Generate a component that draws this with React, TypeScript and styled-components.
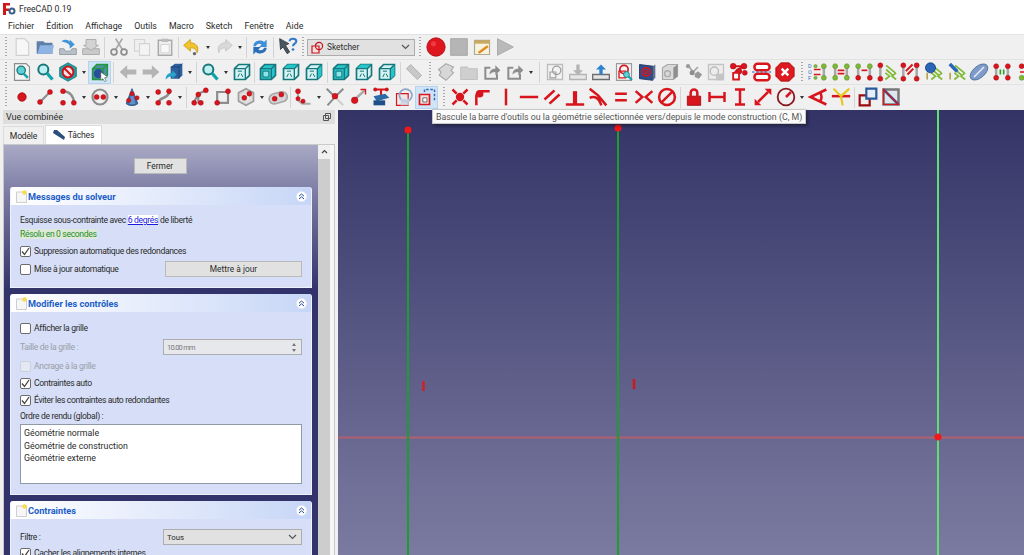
import React from 'react'
import styled, { createGlobalStyle } from 'styled-components'

const GlobalStyle = createGlobalStyle`
  html, body { margin: 0; padding: 0; background: #f0f0f0; }
  body { font-family: Roboto, "Noto Sans", sans-serif; font-size: 8.8px; color: #2b2b2b; }
`

const Page = styled.div`
  position: relative;
  width: 1024px;
  height: 555px;
  overflow: hidden;
  display: flex;
  flex-direction: column;
  background: #f0f0f0;
`

const TitleBar = styled.div`
  height: 17px;
  background: #fff;
  display: flex;
  align-items: center;
  gap: 3px;
  padding-left: 3px;
  font-size: 8.6px;
`

const MenuBar = styled.div`
  height: 17px;
  background: #fff;
  display: flex;
  align-items: center;
  padding-left: 8px;
  gap: 12px;
  font-size: 8.8px;
`

const ToolRow = styled.div`
  height: 25px;
  display: flex;
  align-items: center;
  border-top: 1px solid #e2e2e2;
  box-sizing: border-box;
  background: #f0f0f0;
`

const Grip = styled.div<{ $w: number }>`
  width: ${({ $w }) => $w}px;
  height: 20px;
  flex: none;
  position: relative;
  &::after {
    content: '';
    position: absolute;
    right: 3px;
    top: 0;
    bottom: 0;
    width: 2px;
    background: repeating-linear-gradient(to bottom, #a9a9a9 0 1px, transparent 1px 3px);
  }
`

const ToolBtn = styled.div<{ $active?: boolean }>`
  width: 23px;
  height: 23px;
  flex: none;
  display: flex;
  align-items: center;
  justify-content: center;
  box-sizing: border-box;
  background: ${({ $active }) => ($active ? '#cfe4f7' : 'transparent')};
  border: 1px solid ${({ $active }) => ($active ? '#b5d3ee' : 'transparent')};
  svg { width: 20px; height: 20px; display: block; }
`

const Drop = styled.div`
  width: 9px;
  flex: none;
  display: flex;
  justify-content: center;
  &::before {
    content: '';
    border-left: 2.5px solid transparent;
    border-right: 2.5px solid transparent;
    border-top: 3px solid #333;
  }
`

const Sep = styled.div<{ $w: number }>`
  width: ${({ $w }) => $w}px;
  height: 21px;
  flex: none;
  display: flex;
  justify-content: center;
  &::before {
    content: '';
    width: 1px;
    background: #d4d4d4;
  }
`

const Combo = styled.div<{ $disabled?: boolean }>`
  box-sizing: border-box;
  display: flex;
  align-items: center;
  border: 1px solid #adadad;
  background: ${({ $disabled }) => ($disabled ? '#e6e8ec' : '#e1e1e1')};
  color: ${({ $disabled }) => ($disabled ? '#777' : '#2b2b2b')};
  height: 16px;
  padding: 0 3px;
  gap: 3px;
  font-size: 8.3px;
`

const SketcherCombo = styled(Combo)`
  width: 108px;
  height: 17px;
  flex: none;
  svg.logo { width: 13px; height: 13px; }
`

const Chevron = styled.svg`
  width: 9px;
  height: 6px;
  margin-left: auto;
  margin-right: 1px;
  flex: none;
`

const Main = styled.div`
  flex: 1;
  display: flex;
  min-height: 0;
  margin-top: 1px;
`

const Dock = styled.div`
  width: 338px;
  flex: none;
  display: flex;
  flex-direction: column;
  padding: 0 3px;
  box-sizing: border-box;
`

const DockTitle = styled.div`
  height: 14px;
  flex: none;
  background: #dedede;
  display: flex;
  align-items: center;
  justify-content: space-between;
  padding: 0 4px 0 3px;
  font-size: 9px;
`

const TabStrip = styled.div`
  height: 20px;
  flex: none;
  display: flex;
  align-items: flex-end;
`

const Tab = styled.div<{ $active?: boolean }>`
  height: ${({ $active }) => ($active ? 19 : 18)}px;
  width: ${({ $active }) => ($active ? 57 : 41)}px;
  box-sizing: border-box;
  background: ${({ $active }) => ($active ? '#fff' : '#f0f0f0')};
  border: 1px solid #dcdcdc;
  border-bottom: none;
  display: flex;
  align-items: center;
  justify-content: center;
  gap: 3px;
  font-size: 8.6px;
  letter-spacing: -0.2px;
  margin-left: ${({ $active }) => ($active ? 1 : 0)}px;
`

const TabPane = styled.div`
  flex: 1;
  min-height: 0;
  display: flex;
  border: 1px solid #c9c9c9;
  border-bottom: none;
  background: #f6f6f6;
  padding-right: 4px;
`

const TaskArea = styled.div`
  flex: 1;
  min-width: 0;
  background: linear-gradient(to bottom, #a9a9c5 0, #7a7aa3 50px, #33336b 145px);
  padding: 13px 6px 0 6px;
  display: flex;
  flex-direction: column;
  align-items: stretch;
  font-size: 8.6px;
  letter-spacing: -0.35px;
`

const CloseButton = styled.div`
  align-self: center;
  flex: none;
  width: 53px;
  height: 16px;
  box-sizing: border-box;
  background: #e1e1e1;
  border: 1px solid #b9b9b9;
  display: flex;
  align-items: center;
  justify-content: center;
  margin-bottom: 13px;
  margin-left: -2px;
  font-size: 8.4px;
  letter-spacing: 0;
`

const Card = styled.section`
  flex: none;
  margin-bottom: 6px;
  border-radius: 3px 3px 0 0;
  overflow: hidden;
  background: #d6dff7;
  border: 1px solid #eef2fd;
  border-top: none;
`

const CardHead = styled.header`
  height: 18px;
  background: linear-gradient(to right, #fff, #c7d6f7);
  display: flex;
  align-items: center;
  padding: 0 3px 0 5px;
  gap: 1px;
  color: #215dc6;
  font-weight: 700;
  font-size: 9.2px;
  letter-spacing: 0;
  svg.page { width: 11px; height: 13px; flex: none; }
`

const Collapse = styled.svg`
  width: 11px;
  height: 11px;
  margin-left: auto;
  margin-right: 1px;
`

const CardBody = styled.div<{ $top: number }>`
  padding: ${({ $top }) => $top}px 9px 10px 9px;
  display: flex;
  flex-direction: column;
`

const Row = styled.div<{ $mt?: number; $muted?: boolean }>`
  display: flex;
  align-items: center;
  justify-content: space-between;
  min-height: 14px;
  margin-top: ${({ $mt }) => $mt ?? 0}px;
  color: ${({ $muted }) => ($muted ? '#9a9ea8' : 'inherit')};
`

const CheckLine = styled.label`
  display: flex;
  align-items: center;
  gap: 3px;
`

const Box = styled.span<{ $disabled?: boolean }>`
  width: 11px;
  height: 11px;
  flex: none;
  box-sizing: border-box;
  border: 1px solid ${({ $disabled }) => ($disabled ? '#ccd0da' : '#6c6c6c')};
  border-radius: 2px;
  background: ${({ $disabled }) => ($disabled ? '#e4e8f3' : '#fff')};
  display: flex;
  align-items: center;
  justify-content: center;
  svg { width: 9px; height: 9px; }
`

const LinkText = styled.a`
  color: #1a1ae0;
  text-decoration: underline;
  background: #fff;
  margin: 0 2px;
`

const Solved = styled.span`
  color: #1f8f2f;
  background: #dfe9d8;
`

const UpdateButton = styled.div`
  width: 137px;
  height: 16px;
  box-sizing: border-box;
  background: #e1e1e1;
  border: 1px solid #b9b9b9;
  display: flex;
  align-items: center;
  justify-content: center;
  font-size: 8.4px;
  letter-spacing: 0;
`

const FieldBox = styled(Combo)`
  width: 139px;
  position: relative;
  font-size: ${({ $disabled }) => ($disabled ? 7.4 : 7.8)}px;
  letter-spacing: ${({ $disabled }) => ($disabled ? -0.7 : 0)}px;
`

const Spinner = styled.span`
  margin-left: auto;
  display: flex;
  flex-direction: column;
  gap: 3px;
  margin-right: 2px;
  &::before, &::after {
    content: '';
    border-left: 2px solid transparent;
    border-right: 2px solid transparent;
  }
  &::before { border-bottom: 3px solid #777; }
  &::after { border-top: 3px solid #777; }
`

const ListBox = styled.div`
  height: 60px;
  box-sizing: border-box;
  background: #fff;
  border: 1px solid #8f9aa6;
  margin-top: 1px;
  padding: 2px 3px;
  line-height: 12.5px;
  font-size: 8.8px;
  letter-spacing: 0;
`

const Scrollbar = styled.div`
  width: 12px;
  flex: none;
  background: #f0f0f0;
  display: flex;
  flex-direction: column;
  align-items: center;
  padding-top: 4px;
  svg { width: 7px; height: 5px; flex: none; }
  &::after {
    content: '';
    margin-top: 5px;
    width: 100%;
    flex: 1;
    background: #cdcdcd;
  }
`

const Viewport = styled.div`
  flex: 1;
  position: relative;
  background: linear-gradient(to bottom, #333366 0%, #7b7ba1 100%);
  svg { position: absolute; left: 0; top: 0; display: block; }
`

const Tooltip = styled.div`
  position: absolute;
  left: 432px;
  top: 109px;
  width: 374px;
  height: 15px;
  box-sizing: border-box;
  background: #fbfbfb;
  border: 1px solid #c8c8c8;
  box-shadow: 2px 2px 3px rgba(0, 0, 0, 0.35);
  display: flex;
  align-items: center;
  padding-left: 3px;
  white-space: nowrap;
  color: #555;
`

const RED = '#d8141c'
const DKRED = '#9c0a10'
const TEAL = '#17777c'
const CY = '#27c4ca'
const GREY = '#b4b4b4'
const GREEN = '#7fb935'

const Dot = ({ x, y, r = 3, c = RED }: { x: number; y: number; r?: number; c?: string }) => (
  <circle cx={x} cy={y} r={r} fill={c} stroke={c === RED ? DKRED : '#4d7a1c'} strokeWidth="0.5" />
)
const L = ({ d, c = RED, w = 2.5 }: { d: string; c?: string; w?: number }) => (
  <path d={d} stroke={c} strokeWidth={w} fill="none" />
)
const Glass = ({ fill = '#bff0f0' }: { fill?: string }) => (
  <>
    <circle cx="10" cy="9" r="6" fill={fill} stroke={TEAL} strokeWidth="2.4" />
    <path d="M14.5 13.5 21 21" stroke="#12a3a8" strokeWidth="4" />
  </>
)
const Cube = ({ face }: { face?: 'front' | 'top' | 'right' | 'all' }) => (
  <>
    <path d="M3 8 8 3h13v13l-5 5H3z" fill={face === 'all' ? CY : '#d5f3f3'} stroke={TEAL} strokeWidth="2" />
    {face === 'top' && <path d="M3 8 8 3h13l-5 5z" fill={CY} />}
    {face === 'right' && <path d="M16 8l5-5v13l-5 5z" fill={CY} />}
    <path d="M3 8h13v13M16 8l5-5" fill="none" stroke={TEAL} strokeWidth="1.6" />
    <path d={face === 'all' ? 'M6 11h7v7H6z' : 'M7 18l2-4M13 18l-2-4M7 11h5'} fill={face === 'all' ? '#8ce4e6' : 'none'} stroke={TEAL} strokeWidth="1.2" />
  </>
)
const Arrow = ({ flip, c = GREY }: { flip?: boolean; c?: string }) => (
  <path d="M2 12 11 4v5h11v6H11v5z" fill={c} transform={flip ? 'matrix(-1 0 0 1 24 0)' : undefined} />
)
const Tray = ({ up, c = GREY, a = GREY }: { up?: boolean; c?: string; a?: string }) => (
  <>
    <path d="M2 15h20v6H2z" fill="#e6e6e6" stroke={c} strokeWidth="1.6" />
    <path d={up ? 'M12 3l6 6h-4v6h-4V9H6z' : 'M12 16l6-6h-4V3h-4v7H6z'} fill={a} />
  </>
)
const Share = () => (
  <>
    <path d="M18 14v6H4V7h6" fill="none" stroke="#8d8d8d" strokeWidth="2.4" />
    <path d="M9 15c0-5 3-7 7-7V4l6 6-6 6v-4c-3 0-5 1-7 3z" fill="#8d8d8d" />
  </>
)
const Bars = ({ a }: { a: string }) => <path d={a} stroke={RED} strokeWidth="3" fill="none" />
const Sel = ({ c1, c2, mid }: { c1: string; c2: string; mid: string }) => (
  <>
    <L d="M5 5v14M19 5v14" c="#a8a8a8" w={3} />
    <L d={mid} w={2} />
    <Dot x={5} y={5} c={c1} />
    <Dot x={19} y={5} c={c1} />
    <Dot x={5} y={19} c={c2} />
    <Dot x={19} y={19} c={c2} />
  </>
)
const Chevrons = () => (
  <>
    <L d="M11 4 22 13M11 9 19 16" c={GREEN} w={2} />
    <L d="M10 21l5-4-5-4M23 21l-5-4 5-4" c={GREEN} w={2} />
  </>
)

const icons: Record<string, React.ReactNode> = {
  new: <path d="M5 2h10l5 5v15H5z" fill="#f7f7f7" stroke="#d0d0d0" strokeWidth="1.4" />,
  open: (
    <>
      <path d="M2 5h8l2 2h9v13H2z" fill="#5f7fa8" />
      <path d="M3 20 6 10h17l-3 10z" fill="#8fb4e4" />
    </>
  ),
  save: <><path d="M2 14h5l2 3h6l2-3h5v7H2z" fill="#b8bfc6" stroke="#8d949b" /><path d="M4 5c5-3 9-2 10 1V3l6 6-6 5v-4c-2-3-6-4-10-5z" fill="#3f93d8" /></>,
  saveas: <><path d="M2 14h20v7H2z" fill="#c9c9c9" stroke="#a5a5a5" /><path d="M6 3h12v7h3l-9 6-9-6h3z" fill="#d3d3d3" stroke="#a5a5a5" /></>,
  cut: <><path d="M8 2l8 13M16 2 8 15" stroke="#a8a8a8" strokeWidth="2" /><circle cx="6" cy="18" r="3.5" fill="none" stroke="#8d8d8d" strokeWidth="2" /><circle cx="18" cy="18" r="3.5" fill="none" stroke="#8d8d8d" strokeWidth="2" /></>,
  copy: <><path d="M3 3h12v14H3z" fill="#efefef" stroke="#d4d4d4" strokeWidth="1.4" /><path d="M9 8h12v14H9z" fill="#f3f3f3" stroke="#d4d4d4" strokeWidth="1.4" /></>,
  paste: <><path d="M4 4h16v18H4z" fill="#eee" stroke="#a9a9a9" strokeWidth="1.8" /><path d="M8 2h8v4H8z" fill="#bdbdbd" /><path d="M7 9h10v10H7z" fill="#f8f8f8" stroke="#ccc" /></>,
  undo: <><path d="M10 3 2 10l8 7v-4c4 0 7 1 8 6 3-7-1-12-8-12z" fill="#f2c230" stroke="#c89a10" /><circle cx="15" cy="20" r="2" fill="#666" /></>,
  redo: <path d="M14 3l8 7-8 7v-4c-4 0-7 1-8 6-3-7 1-12 8-12z" fill="#d9d9d9" stroke="#c4c4c4" />,
  refresh: <><path d="M4 11c0-6 8-9 13-5l3-3v9h-9l3-3c-3-2-6-1-7 2z" fill="#3f8fd8" /><path d="M20 13c0 6-8 9-13 5l-3 3v-9h9l-3 3c3 2 6 1 7-2z" fill="#2a6fb8" /></>,
  whats: <><path d="M2 2l11 6-4 2 5 8-3 2-5-8-3 3z" fill="#4a5560" stroke="#2f3840" /><path d="M14 5c0-4 8-4 8 0 0 3-4 3-4 6" fill="none" stroke="#3278c8" strokeWidth="2.4" /><circle cx="18" cy="15" r="1.6" fill="#3278c8" /></>,
  record: <><circle cx="12" cy="12" r="11" fill="#e0161e" stroke="#a50f14" /><circle cx="9" cy="8" r="3" fill="#ee3c42" /></>,
  stop: <path d="M2 2h20v20H2z" fill="#b5b5b5" stroke="#a0a0a0" />,
  macro: <><path d="M3 4h18v17H3z" fill="#f8f3df" stroke="#b0a890" strokeWidth="1.4" /><path d="M3 4h18v4H3z" fill="#c9a860" /><path d="M7 18l11-8 2 2-11 8z" fill="#e08a20" /></>,
  play: <path d="M3 2l19 10L3 22z" fill="#b9b9b9" stroke="#a4a4a4" />,
  fitall: <><path d="M3 2h14l4 4v16H3z" fill="#f4f4f4" stroke="#8d8d8d" strokeWidth="1.4" /><circle cx="11" cy="10" r="5" fill="#5fd0d4" stroke={TEAL} strokeWidth="1.6" /><path d="M14 14l5 5" stroke="#12a3a8" strokeWidth="3" /></>,
  fitsel: <Glass />,
  style: <><path d="M12 1l10 5.5v11L12 23 2 17.5v-11z" fill="#1fa0a6" stroke={TEAL} /><circle cx="12" cy="12" r="6.5" fill="#f0e4e4" stroke="#d0141c" strokeWidth="2.4" /><path d="M7.5 7.5l9 9" stroke="#d0141c" strokeWidth="2.4" /></>,
  navi: <><path d="M3 8l5-5h13v13l-5 5H3z" fill="#4f8f9f" stroke="#1c9a3c" strokeWidth="1.6" /><path d="M3 8h13v13M16 8l5-5" fill="none" stroke="#1c9a3c" strokeWidth="1.4" /><circle cx="10" cy="14" r="5.5" fill="#2a4f9a" /><path d="M13 12l8 6-3.500 1 2 3.500-2 1-2-3.500-2.500 2z" fill="#fff" stroke="#444" strokeWidth=".6" /></>,
  left: <Arrow />,
  right: <Arrow flip />,
  bluecube: <><path d="M8 6l5-4h9v14l-4 4H8z" fill="#2b5f9e" /><path d="M8 6h10v14M18 6l4-4" stroke="#1d3f6e" fill="none" /><path d="M2 21c0-5 3-8 8-8v-3l5 5-5 5v-3c-3 0-5 1-8 4z" fill="#2aa4c8" /></>,
  iso: <Cube />,
  front: <Cube face="all" />,
  top: <Cube face="top" />,
  rightv: <Cube face="right" />,
  ruler: <path d="M3 8l5-5 13 13-5 5z" fill="#c8c8c8" stroke="#a8a8a8" />,
  part: <path d="M12 2l9 4-3 4 3 3-9 9-8-6 2-4-3-3z" fill="#d7d7d7" stroke="#ababab" strokeWidth="1.4" />,
  folder: <path d="M2 6h8l2 2h10v13H2z" fill="#cfcfcf" stroke="#bcbcbc" />,
  share: <Share />,
  sk1: <><path d="M3 3h18v18H3z" fill="#f3f3f3" stroke="#bdbdbd" strokeWidth="1.6" /><circle cx="14" cy="10" r="5" fill="none" stroke="#a0a0a0" strokeWidth="1.6" /><path d="M6 12h7v7H6z" fill="none" stroke="#a0a0a0" strokeWidth="1.4" /></>,
  tdown: <Tray />,
  tup: <Tray up c="#6e6e6e" a="#2d83cf" />,
  skview: <><path d="M3 2h18v20H3z" fill="#f6f6f6" stroke="#9a9a9a" strokeWidth="1.4" /><circle cx="12" cy="9" r="5" fill="none" stroke={RED} strokeWidth="2" /><path d="M6 11h8v8H6z" fill="none" stroke={RED} strokeWidth="1.6" /><circle cx="15" cy="15" r="3.5" fill="#5fd0d4" stroke={TEAL} /><path d="M17.5 17.5l4 4" stroke="#12a3a8" strokeWidth="2.6" /></>,
  skcube: <><path d="M3 3l16 2v17L3 20z" fill="#2b4f8c" stroke="#183060" /><path d="M19 5l3-2v16l-3 3z" fill="#5b6f8f" /><circle cx="11" cy="12" r="5" fill="none" stroke={RED} strokeWidth="2" /><circle cx="11" cy="12" r="2" fill="none" stroke={RED} strokeWidth="1.4" /></>,
  gcube: <><path d="M3 7l6-4h12v14l-5 4H3z" fill="#d9d9d9" stroke="#a8a8a8" strokeWidth="1.4" /><path d="M16 7l5-4v14l-5 4z" fill="#8f8f8f" /><circle cx="9" cy="14" r="3.5" fill="none" stroke="#aaa" strokeWidth="1.6" /></>,
  gnodes: <><path d="M6 4l6 8 6-6" stroke="#a4a4a4" strokeWidth="2" fill="none" /><circle cx="6" cy="5" r="2.5" fill="#9a9a9a" /><circle cx="11" cy="13" r="3" fill="#8d8d8d" /><path d="M14 14l4-3 5 4-4 5-5-2z" fill="#999" /></>,
  glock: <><path d="M3 3h18v18H3z" fill="#ececec" stroke="#c4c4c4" strokeWidth="1.6" /><circle cx="10" cy="11" r="5" fill="none" stroke="#bbb" strokeWidth="1.6" /><path d="M12 14h9v8h-9z" fill="#c4c4c4" /></>,
  rnodes: <><L d="M5 5h12M7 12l10-7M7 14v7" /><Dot x={5} y={5} r={3.5} /><Dot x={18} y={5} r={3.5} /><Dot x={12} y={11} r={3.5} /><Dot x={19} y={13} r={3} /><path d="M5 13h7v8H5z" fill="#fff" stroke={RED} strokeWidth="2.2" /></>,
  rboxes: <><rect x="3" y="2" width="18" height="8" rx="3.5" fill="#fff" stroke={RED} strokeWidth="3" /><rect x="3" y="14" width="18" height="8" rx="3.5" fill="#fff" stroke={RED} strokeWidth="3" /><path d="M0 12h24" stroke="#2e5fb0" strokeWidth="1.4" strokeDasharray="3 2" /></>,
  xstop: <><path d="M7 1h10l6 6v10l-6 6H7l-6-6V7z" fill="#dc1a20" stroke="#a90e12" /><path d="M8 8l8 8M16 8l-8 8" stroke="#fff" strokeWidth="3" /></>,
  dof: (
    <>
      <text x="0" y="7" fontSize="6.5" fill="#3a6fc0" fontFamily="Roboto">D</text>
      <text x="0" y="14.500" fontSize="6.5" fill="#3a6fc0" fontFamily="Roboto">O</text>
      <text x="0" y="22" fontSize="6.5" fill="#3a6fc0" fontFamily="Roboto">F</text>
      <L d="M19 5v14" c="#a8a8a8" w={3} />
      <L d="M7 9h8M7 15h8" w={2} />
      <Dot x={19} y={5} c={GREEN} /><Dot x={19} y={19} c={GREEN} /><Dot x={9} y={5} r={2} c={GREEN} /><Dot x={9} y={19} r={2} c={GREEN} />
    </>
  ),
  conflict: <Sel c1={GREEN} c2={GREEN} mid="M8 10h8M8 14h8" />,
  partial: <Sel c1={GREEN} c2={RED} mid="M9 10h7" />,
  malform: <><L d="M4 4v16" c="#a8a8a8" w={3} /><Chevrons /><Dot x={4} y={4} /><Dot x={4} y={20} /></>,
  redund: <><L d="M4 4v16M20 4v16" c="#a8a8a8" w={3} /><L d="M7 11 15 3M9 15l7-7" w={2.4} /><Dot x={4} y={4} /><Dot x={20} y={4} /><Dot x={4} y={20} /><Dot x={20} y={20} /></>,
  bluecirc: <><Chevrons /><L d="M5 13v8" c="#b8a24a" w={2} /><circle cx="9" cy="7" r="6" fill="#2a66b8" stroke="#163a70" /></>,
  bluedim: <><Chevrons /><L d="M5 13v8" c="#b8a24a" w={2} /><path d="M6 1l9 9-3 3-9-9z" fill="#2a66b8" /></>,
  ellipse: <><ellipse cx="12" cy="12" rx="12.5" ry="7" transform="rotate(-40 12 12)" fill="#7f9cc8" stroke="#4d6d9c" /><L d="M6 18 18 6" c="#e8eef8" w={1.6} /></>,
  sym: <><L d="M5 6v12M19 6v12" c="#a8a8a8" w={3} /><L d="M10 9v6M14 9v6" c="#2aa02a" w={2} /><Dot x={5} y={5} /><Dot x={19} y={5} /><Dot x={5} y={19} /><Dot x={19} y={19} /></>,
  edge: <><L d="M6 6h18M6 12h18" c={RED} w={2} /><Dot x={8} y={5} /><Dot x={8} y={19} c={GREEN} /></>,
  point: <circle cx="12" cy="12" r="5" fill={RED} stroke={DKRED} />,
  line: <><L d="M6 18 18 6" c="#8d8d8d" /><Dot x={6} y={18} /><Dot x={18} y={6} /></>,
  arc: <><path d="M6 5c8 0 13 6 13 14" fill="none" stroke="#8d8d8d" strokeWidth="3" /><Dot x={6} y={5} /><Dot x={6} y={19} /><Dot x={19} y={19} /></>,
  circle: <><circle cx="12" cy="12" r="9" fill="none" stroke="#8d8d8d" strokeWidth="2.6" /><Dot x={8} y={12} /><Dot x={16} y={12} /></>,
  conic: <><path d="M12 2 5 20c4 3 10 3 14 0z" fill="#3a6ea8" stroke="#1f4c80" /><path d="M12 2 9 20c2 1 5 1 7 0z" fill="#5e92cc" /><Dot x={12} y={8} r={2.6} /><Dot x={8} y={16} r={2.6} /><Dot x={18} y={13} r={2.6} /></>,
  bspline: <><path d="M5 19C8 10 16 16 19 5" stroke="#8d8d8d" strokeWidth="3" fill="none" /><Dot x={5} y={6} /><Dot x={18} y={5} /><Dot x={5} y={19} /><Dot x={18} y={19} /></>,
  polyline: <><L d="M4 20 10 8 20 4M10 8l0 12" c="#8d8d8d" /><Dot x={19} y={4} /><Dot x={10} y={9} /><Dot x={5} y={19} /><Dot x={13} y={19} /></>,
  rect: <><path d="M5 6h13v13H5z" fill="none" stroke="#8d8d8d" strokeWidth="2.6" /><Dot x={18} y={5} /><Dot x={5} y={19} /></>,
  polygon: <><path d="M12 2l9 5v10l-9 5-9-5V7z" fill="#ddd" stroke="#9d9d9d" strokeWidth="2" /><circle cx="12" cy="12" r="4" fill="#f0f0f0" /><Dot x={10} y={13} /><Dot x={16} y={8} /></>,
  slot: <><rect x="1" y="7" width="22" height="12" rx="6" transform="rotate(-15 12 12)" fill="#d5d5d5" stroke="#a8a8a8" strokeWidth="2" /><Dot x={8} y={14} /><Dot x={16} y={9} /></>,
  fillet: <><L d="M6 6v10l5 4h10" c="#aaa" /><Dot x={6} y={5} /><Dot x={12} y={17} r={2.6} /><Dot x={6} y={14} r={2.6} /></>,
  trim: <><L d="M2 2l8 8M22 2l-8 8M3 22l8-9" c="#8d8d8d" /><L d="M14 14l8 8" c="#cfcfcf" /><Dot x={12} y={11} r={3.5} /></>,
  extend: <><L d="M8 15 20 4" c="#aaa" w={3} /><Dot x={8} y={16} r={4} /><path d="M15 3h6v6" fill="none" stroke={RED} strokeWidth="1.6" /></>,
  external: <><L d="M4 3h15M12 3v7" c={RED} /><path d="M3 11l14-3 5 5-15 4z" fill="#2f6aa8" /><path d="M3 16h14v6H3z" fill="#1f4f88" /><Dot x={5} y={3} r={2} /><Dot x={19} y={3} r={2} /></>,
  carbon: <><path d="M3 8h14v14H3z" fill="#f1e6e6" stroke={RED} strokeWidth="1.4" /><circle cx="14" cy="10" r="7.5" fill="none" stroke="#8fa7c8" strokeWidth="2" /><path d="M8 14h10v8H8z" fill="#c8d4e4" opacity=".8" /></>,
  construct: <><path d="M3 9h12v12H3z" fill="#f5dfdf" stroke={RED} strokeWidth="2" /><path d="M7 13h5v5H7z" fill="#fff" stroke="#555" /><path d="M9 6V3h12v12h-3" fill="none" stroke="#2e6ab8" strokeWidth="1.8" strokeDasharray="3 2" /></>,
  coincident: <><Bars a="M3 3l5 5M21 3l-5 5M3 21l5-5M21 21l-5-5" /><circle cx="12" cy="12" r="5" fill={RED} /></>,
  ptobj: <><path d="M4 22V11c0-3 2-6 6-6h10" fill="none" stroke={RED} strokeWidth="3" /><circle cx="8" cy="8" r="4.5" fill={RED} /></>,
  vertical: <Bars a="M12 2v20" />,
  horizontal: <Bars a="M1 12h22" />,
  parallel: <Bars a="M3 15 15 4M9 20 21 9" />,
  perp: <><Bars a="M1 21h22" /><path d="M9.500 21V5h5v16z" fill={RED} /></>,
  tangent: <Bars a="M2 2l10 8 10 12M2 13c6-3 11 0 14 9" />,
  equal: <Bars a="M5 8h14M5 16h14" />,
  symmetric: <Bars a="M2 5l8 7-8 7M22 5l-8 7 8 7" />,
  block: <><circle cx="12" cy="12" r="9.5" fill="none" stroke={RED} strokeWidth="3" /><path d="M5.5 18.5l13-13" stroke={RED} strokeWidth="3" /></>,
  lock: <><path d="M4 11h16v11H4z" fill={RED} stroke={DKRED} /><path d="M8 11V7a4 4 0 0 1 8 0v4" fill="none" stroke={RED} strokeWidth="3" /></>,
  dx: <Bars a="M3 6v12M21 6v12M3 12h18" />,
  dy: <Bars a="M6 3h12M6 21h12M12 3v18" />,
  dist: <><Bars a="M6 18 18 6" /><path d="M2 22v-8l8 8zM22 2v8l-8-8z" fill={RED} /></>,
  radius: <><circle cx="12" cy="12" r="10" fill="none" stroke="#8a1a20" strokeWidth="2.2" /><Bars a="M12 12l6-6" /></>,
  angle: <Bars a="M22 3 3 12l19 9M14 6c3 4 3 8 0 12" />,
  snell: <><Bars a="M1 11h22" /><path d="M3 2l9 9 2 11M22 2 12 11" fill="none" stroke="#e8c820" strokeWidth="2.6" /></>,
  toggleC: <><path d="M2 10h12v12H2z" fill="none" stroke={DKRED} strokeWidth="2.6" /><path d="M10 2h12v12H10z" fill="#e6eef8" stroke="#2a5a9a" strokeWidth="2.6" /></>,
  active: <><path d="M3 3h18v18H3z" fill="#dfe6ee" stroke="#777" strokeWidth="3" /><path d="M3 3l18 18" stroke="#2a5a9a" strokeWidth="3" /><path d="M3 21V3l18 18z" fill="none" stroke={RED} strokeWidth="1.4" /></>,
}

type Item = string | number

// nom = bouton, '>' = flèche de menu, '*' = bouton survolé, nombre négatif = poignée, positif = séparateur
const row1: Item[] = [-10, 'new', 'open', 'save', 'saveas', 5, 'cut', 'copy', 'paste', 4, 'undo', '>', 'redo', '>', 4, 'refresh', 5, 'whats', -8]
const row1b: Item[] = [-9, 'record', 'stop', 'macro', 'play']
const row2: Item[] = [
  -10, 'fitall', 'fitsel', 'style', '>', '*navi', 5, 'left', 'right', 'bluecube', '>', 4, 'fitsel', '>', 'iso', 3, 'front', 'top', 'rightv',
  4, 'front', 'top', 'rightv', 4, 'ruler', -9, 'part', 'folder', 'share', 'share', '>', 8, 'sk1', 'tdown', 'tup', 'skview', 'skcube', 'gcube', 'gnodes', 'glock', 'rnodes', 'rboxes', 'xstop',
  -10, 'dof', 'conflict', 'partial', 'malform', 'redund', 'bluecirc', 'bluedim', 'ellipse', 'sym', 'edge',
]
const row3: Item[] = [
  -10, 'point', 'line', 'arc', '>', 'circle', '>', 'conic', '>', 'bspline', '>', 4, 'polyline', 'rect', 'polygon', '>', 'slot', 2, 'fillet', '>', 'trim', 'extend', 'external', 'carbon', '*construct',
  -10, 'coincident', 'ptobj', 'vertical', 'horizontal', 'parallel', 'perp', 'tangent', 'equal', 'symmetric', 'block', 4, 'lock', 'dx', 'dy', 'dist', 'radius', '>', 'angle', 'snell', 4, 'toggleC', 'active',
]

function ToolItems({ items }: { items: Item[] }) {
  return (
    <>
      {items.map((it, i) => {
        if (typeof it === 'number') return it < 0 ? <Grip key={i} $w={-it} /> : <Sep key={i} $w={it} />
        if (it === '>') return <Drop key={i} />
        const active = it[0] === '*'
        return (
          <ToolBtn key={i} $active={active}>
            <svg viewBox="0 0 24 24">{icons[active ? it.slice(1) : it]}</svg>
          </ToolBtn>
        )
      })}
    </>
  )
}

const ChevronDown = () => (
  <Chevron viewBox="0 0 9 6">
    <path d="M1 1l3.5 3.5L8 1" fill="none" stroke="#555" strokeWidth="1.2" />
  </Chevron>
)

const Check = ({ on, disabled, children }: { on?: boolean; disabled?: boolean; children: React.ReactNode }) => (
  <CheckLine>
    <Box $disabled={disabled}>
      {on && (
        <svg viewBox="0 0 9 9">
          <path d="M1 4.5 3.5 7.5 8 1" fill="none" stroke="#444" strokeWidth="1.3" />
        </svg>
      )}
    </Box>
    {children}
  </CheckLine>
)

const Panel = ({ title, top, children }: { title: string; top: number; children: React.ReactNode }) => (
  <Card>
    <CardHead>
      <svg className="page" viewBox="0 0 11 13">
        <path d="M0.5 2h10v10.5h-10z" fill="#f6f6f6" stroke="#cfcfcf" />
        <circle cx="8.5" cy="2.5" r="2.3" fill="#f6dc50" />
      </svg>
      {title}
      <Collapse viewBox="0 0 11 11">
        <circle cx="5.5" cy="5.5" r="5.2" fill="#fff" stroke="#d5dff5" strokeWidth=".6" />
        <path d="M3 5.2l2.5-2.2L8 5.2M3 8l2.5-2.2L8 8" fill="none" stroke="#244a9a" strokeWidth="1" />
      </Collapse>
    </CardHead>
    <CardBody $top={top}>{children}</CardBody>
  </Card>
)

export default function App() {
  return (
    <Page>
      <GlobalStyle />
      <TitleBar>
        <svg width="13" height="12" viewBox="0 0 13 12">
          <path d="M0 0h7v2.5H3v3h3v2.5H3V12H0z" fill="#cc1a1a" />
          <circle cx="9" cy="8" r="2.5" fill="none" stroke="#3a5f8a" strokeWidth="2" />
        </svg>
        FreeCAD 0.19
      </TitleBar>
      <MenuBar>
        {['Fichier', 'Édition', 'Affichage', 'Outils', 'Macro', 'Sketch', 'Fenêtre', 'Aide'].map((m) => (
          <span key={m}>{m}</span>
        ))}
      </MenuBar>
      <ToolRow>
        <ToolItems items={row1} />
        <SketcherCombo>
          <svg className="logo" viewBox="0 0 13 13">
            <path d="M1 5h7v7H1z" fill="#f6e0e0" stroke="#c8141c" strokeWidth="1.2" />
            <circle cx="8" cy="5" r="3.6" fill="none" stroke="#c8141c" strokeWidth="1.2" />
          </svg>
          Sketcher
          <ChevronDown />
        </SketcherCombo>
        <ToolItems items={row1b} />
      </ToolRow>
      <ToolRow>
        <ToolItems items={row2} />
      </ToolRow>
      <ToolRow>
        <ToolItems items={row3} />
      </ToolRow>
      <Main>
        <Dock>
          <DockTitle>
            Vue combinée
            <svg width="8" height="8" viewBox="0 0 8 8">
              <path d="M2.5 0.5h5v5h-5zM0.5 2.5h5v5h-5z" fill="#dedede" stroke="#555" />
            </svg>
          </DockTitle>
          <TabStrip>
            <Tab>Modèle</Tab>
            <Tab $active>
              <svg width="12" height="10" viewBox="0 0 12 10">
                <path d="M1 0h3l8 7-1 3L0 3z" fill="#2c4f7c" />
              </svg>
              Tâches
            </Tab>
          </TabStrip>
          <TabPane>
            <TaskArea>
              <CloseButton>Fermer</CloseButton>
              <Panel title="Messages du solveur" top={8}>
                <Row>
                  <span>
                    Esquisse sous-contrainte avec<LinkText>6 degrés</LinkText>de liberté
                  </span>
                </Row>
                <Row>
                  <Solved>Résolu en 0 secondes</Solved>
                </Row>
                <Row $mt={3}>
                  <Check on>Suppression automatique des redondances</Check>
                </Row>
                <Row $mt={3}>
                  <Check>Mise à jour automatique</Check>
                  <UpdateButton>Mettre à jour</UpdateButton>
                </Row>
              </Panel>
              <Panel title="Modifier les contrôles" top={9}>
                <Row>
                  <Check>Afficher la grille</Check>
                </Row>
                <Row $mt={4} $muted>
                  Taille de la grille :
                  <FieldBox $disabled>
                    10.00 mm
                    <Spinner />
                  </FieldBox>
                </Row>
                <Row $mt={4} $muted>
                  <Check disabled>Ancrage à la grille</Check>
                </Row>
                <Row $mt={3}>
                  <Check on>Contraintes auto</Check>
                </Row>
                <Row $mt={3}>
                  <Check on>Éviter les contraintes auto redondantes</Check>
                </Row>
                <Row $mt={2}>Ordre de rendu (global) :</Row>
                <ListBox>
                  <div>Géométrie normale</div>
                  <div>Géométrie de construction</div>
                  <div>Géométrie externe</div>
                </ListBox>
              </Panel>
              <Panel title="Contraintes" top={10}>
                <Row>
                  Filtre :
                  <FieldBox>
                    Tous
                    <ChevronDown />
                  </FieldBox>
                </Row>
                <Row $mt={1}>
                  <Check on>Cacher les alignements internes</Check>
                </Row>
              </Panel>
            </TaskArea>
            <Scrollbar>
              <svg viewBox="0 0 7 5">
                <path d="M1 4l2.5-2.5L6 4" fill="none" stroke="#444" strokeWidth="1.2" />
              </svg>
            </Scrollbar>
          </TabPane>
        </Dock>
        <Viewport>
          <svg width="686" height="446" viewBox="338 109 686 446">
            <path d="M338 436.5H1024" stroke="#b0606e" strokeWidth="2" />
            <path d="M408 129V555M618 127V555" stroke="#1f9d2c" strokeWidth="2" />
            <path d="M938 109V555" stroke="#5fe070" strokeWidth="2" />
            <path d="M423.5 380v10" stroke="#d02020" strokeWidth="2.5" />
            <path d="M634 378v10" stroke="#d01818" strokeWidth="2.5" />
            <circle cx="408" cy="129" r="3.5" fill="#f01818" />
            <circle cx="618" cy="127" r="3.5" fill="#f01818" />
            <circle cx="938" cy="436" r="3.5" fill="#f01818" />
          </svg>
        </Viewport>
      </Main>
      <Tooltip>Bascule la barre d'outils ou la géométrie sélectionnée vers/depuis le mode construction (C, M)</Tooltip>
    </Page>
  )
}
